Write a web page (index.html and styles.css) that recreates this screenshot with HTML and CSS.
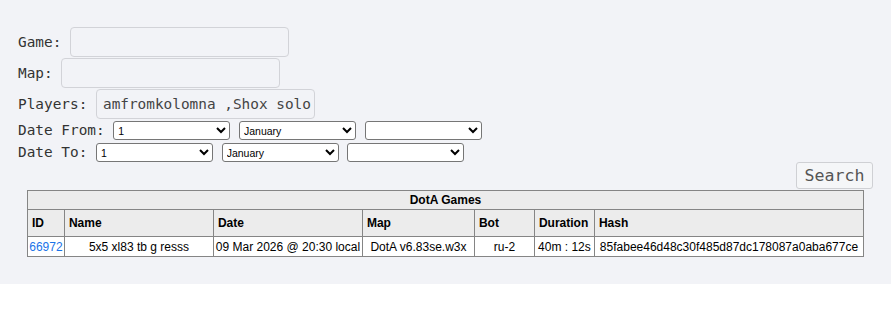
FILE: index.html
```html
<!DOCTYPE html>
<html lang="en">
<head>
  <meta charset="UTF-8">
  <meta name="viewport" content="width=device-width, initial-scale=1.0">
  <title>DotA Games</title>
  <link rel="stylesheet" href="styles.css">
</head>
<body>
  <div class="page">
    <form class="search-form">
      <div class="row field-row">
        <label for="game">Game:</label>
        <input type="text" id="game" class="text-input">
      </div>
      <div class="row field-row">
        <label for="map">Map:</label>
        <input type="text" id="map" class="text-input">
      </div>
      <div class="row field-row">
        <label for="players">Players:</label>
        <input type="text" id="players" class="text-input" value="amfromkolomna ,Shox_solo">
      </div>
      <div class="row date-row">
        <label>Date From:</label>
        <select class="date-select"><option>1</option></select>
        <select class="date-select"><option>January</option></select>
        <select class="date-select"><option></option></select>
      </div>
      <div class="row date-row last">
        <label>Date To:</label>
        <select class="date-select"><option>1</option></select>
        <select class="date-select"><option>January</option></select>
        <select class="date-select"><option></option></select>
      </div>
      <div class="actions">
        <button type="submit" class="search-btn">Search</button>
      </div>
    </form>

    <table class="games">
      <colgroup>
        <col style="width: 37px">
        <col style="width: 149px">
        <col style="width: 149px">
        <col style="width: 112px">
        <col style="width: 60px">
        <col style="width: 60px">
        <col style="width: 269px">
      </colgroup>
      <thead>
        <tr><th colspan="7" class="title">DotA Games</th></tr>
        <tr>
          <th>ID</th>
          <th>Name</th>
          <th>Date</th>
          <th>Map</th>
          <th>Bot</th>
          <th>Duration</th>
          <th>Hash</th>
        </tr>
      </thead>
      <tbody>
        <tr>
          <td><a href="#">66972</a></td>
          <td>5x5 xl83 tb g resss</td>
          <td>09 Mar 2026 @ 20:30 local</td>
          <td>DotA v6.83se.w3x</td>
          <td>ru-2</td>
          <td>40m : 12s</td>
          <td>85fabee46d48c30f485d87dc178087a0aba677ce</td>
        </tr>
      </tbody>
    </table>
  </div>
</body>
</html>
```

FILE: styles.css
```css
body {
  margin: 0;
  font-family: "DejaVu Sans Mono", monospace;
  color: #333;
}

.page {
  background-color: #f2f3f7;
  padding: 27px 18px 27px;
}

.row {
  display: flex;
  align-items: flex-start;
  gap: 8.67px;
  font-size: 14.4px;
}

.field-row {
  height: 31px;
}

.field-row label {
  line-height: 30px;
}

.date-row {
  height: 22px;
}

.date-row.last {
  height: 20px;
}

.date-row label {
  line-height: 19px;
  margin-top: 1px;
}

.text-input {
  box-sizing: border-box;
  width: 219px;
  height: 30px;
  padding: 0 1px 0 6px;
  border: 1px solid #d2d3d8;
  border-radius: 4px;
  background: #f2f3f7;
  font-family: "DejaVu Sans Mono", monospace;
  font-size: 14.4px;
  line-height: 20px;
  color: #444;
}

.date-select {
  box-sizing: border-box;
  width: 117px;
  height: 19px;
  margin-top: 1px;
  font-family: "Liberation Sans", Arial, sans-serif;
  font-size: 10.5px;
  color: #000;
  background: #fff;
  border: 1px solid #767676;
  border-radius: 3px;
}

.actions {
  display: flex;
  justify-content: flex-end;
}

.search-btn {
  box-sizing: border-box;
  width: 77px;
  height: 27px;
  padding: 0;
  font-family: "DejaVu Sans Mono", monospace;
  font-size: 16.6px;
  color: #555;
  background: #f5f6f8;
  border: 1px solid #cfd0d4;
  border-radius: 3px;
}

.games {
  margin: 1px auto 0;
  border-collapse: collapse;
  table-layout: fixed;
  width: 836px;
  font-family: "Liberation Sans", Arial, sans-serif;
  font-size: 12px;
  color: #000;
  background: #fff;
  border: 1px solid #858585;
}

.games th,
.games td {
  border: 1px solid #858585;
  white-space: nowrap;
  overflow: hidden;
}

.games th {
  background: #ececec;
  text-align: left;
  padding: 6px 4px;
  height: 13px;
}

.games th.title {
  text-align: center;
  padding: 2px 4px;
  height: 14px;
}

.games td {
  text-align: center;
  padding: 3px 1px 2px;
}

.games a {
  color: #1a73e8;
  text-decoration: none;
}
```
